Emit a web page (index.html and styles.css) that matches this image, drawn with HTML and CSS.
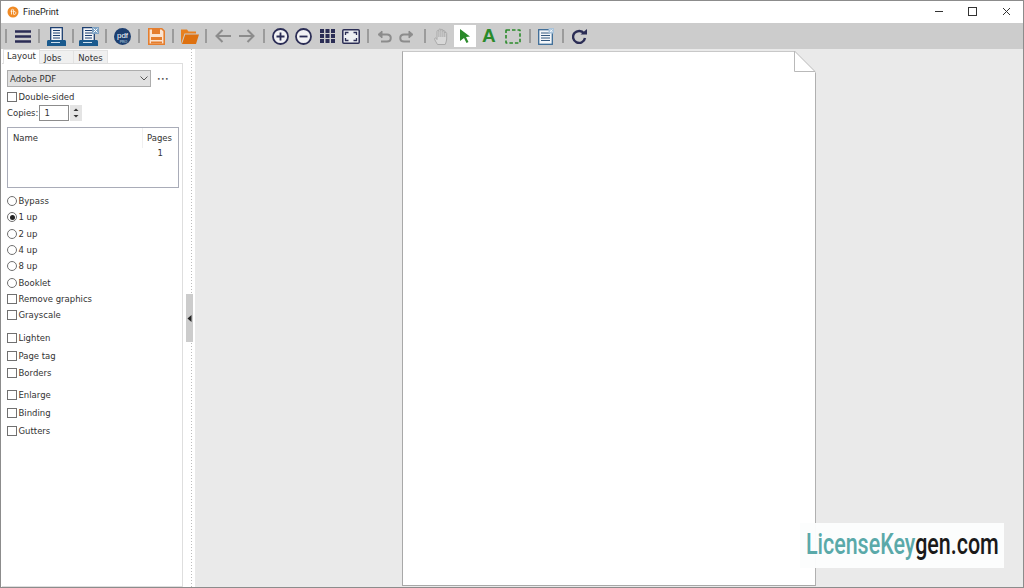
FILE: index.html
```html
<html>
<head>
<meta charset="utf-8"/>
<title>FinePrint</title>
<link rel="stylesheet" href="styles.css">
</head>
<body>
<div class="window">

<div class="titlebar">
    <svg class="app-icon" width="12" height="12" viewBox="0 0 12 12"><circle cx="6" cy="6" r="5.5" fill="#f08a24"/><path d="M4.500 8.500V4.200c0-.8.5-1 1.200-1M3.600 5.200h2M6.600 3.400v5c1.600.3 2.200-.4 2.200-1.500S8 5.300 6.600 5.600" fill="none" stroke="#fff" stroke-width=".8"/></svg>
    <span class="app-name">FinePrint</span>
    <div class="win-btns">
        <svg width="36" height="22" viewBox="0 0 36 22"><path d="M8 10.500h8" stroke="#333" stroke-width="1"/></svg>
        <svg width="36" height="22" viewBox="0 0 36 22"><rect x="5.500" y="6.500" width="8" height="8" fill="none" stroke="#333"/></svg>
        <svg width="24" height="22" viewBox="0 0 24 22"><path d="M4 7l7 7M11 7l-7 7" stroke="#333" fill="none"/></svg>
    </div>
</div>

<div class="toolbar">
    <i class="sep"></i>
    <div class="tool"><svg width="16" height="13" viewBox="0 0 16 13"><path d="M0 1.500h16M0 6.500h16M0 11.500h16" stroke="#2b2d55" stroke-width="2.400"/></svg></div>
    <i class="sep"></i>
    <div class="tool"><svg width="19" height="19" viewBox="0 0 19 19"><path d="M3.700 13V.7h11.600V13" fill="#f3f5f8" stroke="#1d3f70" stroke-width="1.300"/><path d="M6 3.500h7M6 6h7M6 8.500h7M6 11h7" stroke="#1d3f70"/><path d="M0 19v-4.500c0-1 .7-1.500 1.500-1.500h16c.8 0 1.500.5 1.500 1.500V19z" fill="#1a5a8e"/><path d="M4 15.500h9" stroke="#cfe0ee"/></svg></div>
    <i class="sep"></i>
    <div class="tool"><svg width="20" height="19" viewBox="0 0 20 19"><path d="M3.700 13V.7h11.600V13" fill="#f3f5f8" stroke="#1d3f70" stroke-width="1.300"/><path d="M6 3.500h7M6 6h7M6 8.500h7M6 11h7" stroke="#1d3f70"/><rect x="13" y="0" width="7" height="7" fill="#7fa3c4"/><path d="M14.500 1.500l4 4M18.500 1.500l-4 4" stroke="#fff"/><path d="M0 19v-4.500c0-1 .7-1.500 1.500-1.500h16c.8 0 1.500.5 1.500 1.500V19z" fill="#1a5a8e"/><path d="M4 15.500h9" stroke="#cfe0ee"/></svg></div>
    <i class="sep"></i>
    <div class="tool"><svg width="17" height="17" viewBox="0 0 17 17"><circle cx="8.500" cy="8.500" r="8.500" fill="#1d3f70"/><text x="8.500" y="10" class="pdf-text" text-anchor="middle">pdf</text><text x="9.500" y="14.500" class="pro-text" text-anchor="middle">PRO</text></svg></div>
    <i class="sep"></i>
    <div class="tool"><svg width="17" height="17" viewBox="0 0 17 17"><path d="M.8 .8h13l2.400 2.400v13H.8z" fill="#fbe3d0" stroke="#e57e2e" stroke-width="1.600"/><rect x="4" y="1" width="8" height="5" fill="#e57e2e"/><rect x="3" y="9" width="11" height="3" fill="#e57e2e"/><rect x="3" y="13.500" width="11" height="2" fill="#e57e2e"/></svg></div>
    <i class="sep"></i>
    <div class="tool"><svg width="18" height="16" viewBox="0 0 18 16"><path d="M0 16V1.500h6l1.500 2h7.500v2H3.500L0 16z" fill="#e8801f"/><path d="M1 16l3.200-9.500H18L15 16z" fill="#de7110"/></svg></div>
    <i class="sep"></i>
    <div class="tool"><svg width="16" height="14" viewBox="0 0 16 14"><path d="M16 7H1.500M7.500 1L1.500 7l6 6" fill="none" stroke="#8c8c8c" stroke-width="2"/></svg></div>
    <div class="tool"><svg width="16" height="14" viewBox="0 0 16 14"><path d="M0 7h14.500M8.500 1l6 6-6 6" fill="none" stroke="#8c8c8c" stroke-width="2"/></svg></div>
    <i class="sep"></i>
    <div class="tool snug"><svg width="17" height="17" viewBox="0 0 17 17"><circle cx="8.500" cy="8.500" r="7.500" fill="#f2f2f4" stroke="#2b2d55" stroke-width="1.800"/><path d="M4.500 8.500h8M8.500 4.500v8" stroke="#2b2d55" stroke-width="1.800"/></svg></div>
    <div class="tool snug"><svg width="17" height="17" viewBox="0 0 17 17"><circle cx="8.500" cy="8.500" r="7.500" fill="#f2f2f4" stroke="#2b2d55" stroke-width="1.800"/><path d="M4.500 8.500h8" stroke="#2b2d55" stroke-width="1.800"/></svg></div>
    <div class="tool snug"><svg width="15" height="14" viewBox="0 0 15 14" fill="#2b2d55"><rect width="4" height="4"/><rect x="5.500" width="4" height="4"/><rect x="11" width="4" height="4"/><rect y="5" width="4" height="4"/><rect x="5.500" y="5" width="4" height="4"/><rect x="11" y="5" width="4" height="4"/><rect y="10" width="4" height="4"/><rect x="5.500" y="10" width="4" height="4"/><rect x="11" y="10" width="4" height="4"/></svg></div>
    <div class="tool snug"><svg width="18" height="15" viewBox="0 0 18 15"><rect x=".8" y=".8" width="16.400" height="13.400" rx="1" fill="#eef0f3" stroke="#2b2d55" stroke-width="1.500"/><path d="M3.500 6V3.500H6.500M11.500 3.500h3V6M14.500 9v2.500h-3M6.500 11.500h-3V9" fill="none" stroke="#2b2d55" stroke-width="1.300"/></svg></div>
    <i class="sep after-snug"></i>
    <div class="tool narrow"><svg width="15" height="13" viewBox="0 0 15 13"><path d="M5 1L1 4.500 5 8z" fill="#8c8c8c" stroke="#8c8c8c"/><path d="M4 4.500h6c5 0 5 7 0 7H4" fill="none" stroke="#8c8c8c" stroke-width="2"/></svg></div>
    <div class="tool narrow"><svg width="15" height="13" viewBox="0 0 15 13"><path d="M10 1l4 3.500L10 8z" fill="#8c8c8c" stroke="#8c8c8c"/><path d="M11 4.500H5c-5 0-5 7 0 7h6" fill="none" stroke="#8c8c8c" stroke-width="2"/></svg></div>
    <i class="sep after-narrow"></i>
    <div class="tool"><svg width="15" height="17" viewBox="0 0 15 17"><path d="M3.500 16.500C2.500 14.500.2 11.500.6 10.500c.5-1 1.800-.4 2.400 1V3.500c0-1.400 1.900-1.400 1.900 0V2c0-1.400 2-1.400 2 0v.3c0-1.300 2-1.300 2 0v1c.2-1.200 1.900-1 1.900.2V5c.3-1 1.900-.8 1.900.5V11c0 2.300-1 3.800-1.500 5.500z" fill="#d8d8d8" stroke="#a8a8a8"/><path d="M4.900 3.500V9M6.900 2v7M8.900 2.300V9M10.800 3.500V9" stroke="#a8a8a8" fill="none"/></svg></div>
    <div class="tool active"><svg width="10" height="14" viewBox="0 0 10 14"><path d="M0 0l10 7.500-4 .5 2.500 5-2 1L4 9 0 12z" fill="#2a8a2a"/></svg></div>
    <div class="tool"><span class="tool-a">A</span></div>
    <div class="tool"><svg width="16" height="15" viewBox="0 0 16 15"><rect x="1" y="1" width="14" height="13" rx=".5" fill="none" stroke="#2a8a2a" stroke-width="1.600" stroke-dasharray="3.500 2"/></svg></div>
    <i class="sep"></i>
    <div class="tool"><svg width="16" height="17" viewBox="0 0 16 17"><rect x=".7" y="1.700" width="13.600" height="14.600" fill="#f4f7fa" stroke="#3b6a96" stroke-width="1.300"/><path d="M3 5h9M3 7.500h9M3 10h9M3 12.500h9" stroke="#33587e"/><rect x="10.500" width="5.500" height="5.500" fill="#a9c3da"/><path d="M12 1.500l2.500 2.500M14.500 1.500L12 4" stroke="#fff" stroke-width=".8"/></svg></div>
    <i class="sep"></i>
    <div class="tool"><svg width="15" height="15" viewBox="0 0 15 15"><path d="M12 4.500A6 6 0 1 0 13 9" fill="none" stroke="#2b2d55" stroke-width="2.400"/><path d="M8.500 5.500H15V0z" fill="#2b2d55"/></svg></div>
</div>

<div class="main">
    <div class="sidebar">
        <div class="tabs">
            <div class="tab on">Layout</div>
            <div class="tab jobs">Jobs</div>
            <div class="tab">Notes</div>
        </div>
        <div class="panel">
            <div class="printer-row">
                <div class="combo">Adobe PDF
                    <svg width="8" height="5" viewBox="0 0 8 5"><path d="M.5 .5L4 4 7.500 .5" fill="none" stroke="#555"/></svg>
                </div>
                <span class="dots">•••</span>
            </div>
            <label class="opt duplex"><i class="box"></i>Double-sided</label>
            <div class="copies">
                <span>Copies:</span>
                <div class="spin-input">1</div>
                <div class="spin">
                    <svg width="12" height="7" viewBox="0 0 12 7"><path d="M3.500 5L6 2.500 8.500 5z" fill="#333"/></svg>
                    <svg width="12" height="7" viewBox="0 0 12 7"><path d="M3.500 2L6 4.500 8.500 2z" fill="#333"/></svg>
                </div>
            </div>
            <div class="joblist">
                <div class="job-head"><span class="col-name">Name</span><span class="col-pages">Pages</span></div>
                <div class="job-row">1</div>
            </div>

            <div class="opts">
                <label class="opt"><i class="radio"></i>Bypass</label>
                <label class="opt"><i class="radio checked"></i>1 up</label>
                <label class="opt"><i class="radio"></i>2 up</label>
                <label class="opt"><i class="radio"></i>4 up</label>
                <label class="opt"><i class="radio"></i>8 up</label>
                <label class="opt"><i class="radio"></i>Booklet</label>
                <label class="opt"><i class="box"></i>Remove graphics</label>
                <label class="opt"><i class="box"></i>Grayscale</label>
                <label class="opt group"><i class="box"></i>Lighten</label>
                <label class="opt tall"><i class="box"></i>Page tag</label>
                <label class="opt"><i class="box"></i>Borders</label>
                <label class="opt group"><i class="box"></i>Enlarge</label>
                <label class="opt tall"><i class="box"></i>Binding</label>
                <label class="opt tall"><i class="box"></i>Gutters</label>
            </div>
        </div>
    </div>

    <div class="splitter">
        <div class="grip"><svg width="5" height="7" viewBox="0 0 5 7"><path d="M4.500 0v7L.5 3.500z" fill="#222"/></svg></div>
    </div>

    <div class="canvas">
        <div class="page">
            <svg class="fold" width="22" height="22" viewBox="0 0 22 22"><path d="M0 0h22v22z" fill="#eaeaea"/><path d="M.5 0v20.500H21L.5 0z" fill="#fff" stroke="#b9b9b9"/></svg>
        </div>
        <div class="stamp"><span class="stamp-text"><span class="teal">LicenseKey</span>gen.com</span></div>
    </div>
</div>

</div>
</body>
</html>
```

FILE: styles.css
```css
html,body{
padding:0;margin:0;
height:100%;
overflow:hidden;
}
body{
font-family:"DejaVu Sans",sans-serif;
font-size:8.500px;
color:#333;
}
i{font-style:normal;}

.window{
box-sizing:border-box;
width:1024px;
height:588px;
border:1px solid #8c8c8c;
display:flex;
flex-direction:column;
background:#fff;
}

/* title bar */
.titlebar{
height:22px;
display:flex;
align-items:center;
padding-left:6px;
}
.app-icon{margin-right:4px;}
.app-name{
font-family:Roboto,sans-serif;
font-size:9px;
color:#222;
}
.win-btns{
margin-left:auto;
display:flex;
}

/* toolbar */
.toolbar{
height:26px;
background:#cccccc;
display:flex;
align-items:center;
padding-left:.3px;
}
.sep{
width:2px;
height:14px;
background:#8f8f8f;
margin:0 3.700px;
opacity:.8;
}
.after-snug{margin-left:4.700px;}
.after-narrow{margin-left:7.200px;}
.tool{
width:24px;
height:22px;
display:flex;
align-items:center;
justify-content:center;
}
.snug{width:23.600px;}
.narrow{width:22px;}
.active{background:#fff;width:22px;margin:0 1px 0 0;}
.tool-a{
font-family:"Liberation Sans",sans-serif;
font-weight:bold;
font-size:19px;
line-height:20px;
color:#2a8a2a;
}
.pdf-text{
font-family:"Liberation Sans",sans-serif;
font-size:8px;
fill:#fff;
}
.pro-text{
font-family:"Liberation Sans",sans-serif;
font-size:3.500px;
fill:#cfe0ee;
}

/* left panel */
.main{
flex:1;
display:flex;
min-height:0;
}
.sidebar{
width:182px;
padding-left:1px;
box-sizing:border-box;
display:flex;
flex-direction:column;
}
.tabs{
display:flex;
height:15px;
padding:1px 0 0 2px;
box-sizing:border-box;
margin-bottom:-1px;
align-items:flex-end;
}
.tab{
height:14px;
line-height:15px;
background:#f0f0f0;
border:1px solid #e2e2e2;
border-bottom:0;
box-sizing:border-box;
text-align:center;
width:35px;
margin-left:-1px;
}
.tab.jobs{
text-align:left;
padding-left:4px;
}
.tab.on{
background:#fff;
height:15px;
line-height:13px;
width:37px;
position:relative;
z-index:1;
margin-top:-1px;
}
.panel{
flex:1;
border:1px solid #dedede;
border-left:0;
padding:6px 2px 0 5px;
}
.printer-row{
display:flex;
align-items:center;
height:17px;
}
.combo{
width:144px;
height:17px;
box-sizing:border-box;
background:#e1e1e1;
border:1px solid #adadad;
padding:0 2px;
display:flex;
align-items:center;
justify-content:space-between;
}
.dots{
margin-left:6px;
font-size:6px;
letter-spacing:.5px;
color:#444;
}
.opt{
display:flex;
align-items:center;
height:16.300px;
}
.duplex{margin-top:2px;}
.box{
width:8px;
height:8px;
border:1px solid #707070;
background:#fff;
margin-right:1.500px;
flex:none;
}
.radio{
width:8px;
height:8px;
border:1px solid #707070;
border-radius:50%;
background:#fff;
margin-right:1.500px;
flex:none;
position:relative;
}
.radio.checked::after{
content:"";
position:absolute;
left:1.500px;
top:1.500px;
width:5px;
height:5px;
border-radius:50%;
background:#222;
}
.copies{
display:flex;
align-items:center;
height:17px;
margin-top:-.5px;
}
.spin-input{
width:30px;
height:16px;
line-height:15px;
box-sizing:border-box;
border:1px solid #8c8c8c;
padding-left:4px;
margin-left:1px;
background:#fff;
}
.spin{
width:12px;
height:16px;
background:#e4e4e4;
display:flex;
flex-direction:column;
justify-content:center;
margin-left:1px;
}
.spin svg{display:block;height:7px;}
.joblist{
width:172px;
height:61px;
box-sizing:border-box;
border:1px solid #a9acb8;
margin-top:5.500px;
}
.job-head{
display:flex;
height:20px;
align-items:center;
justify-content:space-between;
padding:0 6px 0 5px;
}
.col-pages{border-left:1px solid #f0f0f0;padding-left:4px;height:20px;line-height:20px;}
.job-row{
text-align:right;
padding-right:15px;
line-height:10px;
}
.opts{margin-top:4.700px;}
.group{margin-top:5.500px;height:17.800px;}
.tall{height:17.800px;}

/* splitter */
.splitter{
width:12px;
position:relative;
background-image:linear-gradient(#bbb 50%,transparent 50%);
background-size:1px 3px;
background-repeat:repeat-y;
background-position:8px 0;
}
.grip{
position:absolute;
left:3px;
top:245px;
width:7px;
height:48px;
background:#cccccc;
display:flex;
align-items:center;
justify-content:center;
}

/* page view */
.canvas{
flex:1;
background:#eaeaea;
position:relative;
padding-top:2px;
}
.page{
width:414px;
height:535px;
box-sizing:border-box;
background:#fff;
border:1px solid #a8a8a8;
border-top-color:#c8c8c8;
border-right-color:#b0b0b0;
margin:0 auto;
position:relative;
}
.fold{
position:absolute;
top:-1px;
right:-1px;
}

/* watermark */
.stamp{
position:absolute;
left:605px;
top:474px;
width:204px;
height:45px;
padding-bottom:4px;
box-sizing:border-box;
background:rgba(252,253,253,.97);
display:flex;
align-items:center;
justify-content:center;
}
.stamp-text{
font-family:Roboto,sans-serif;
font-size:29px;
font-weight:500;
line-height:40px;
color:#1a1a1a;
white-space:nowrap;
flex:none;
transform:scaleX(.74);
}
.teal{color:#5aa9a9;}
```
